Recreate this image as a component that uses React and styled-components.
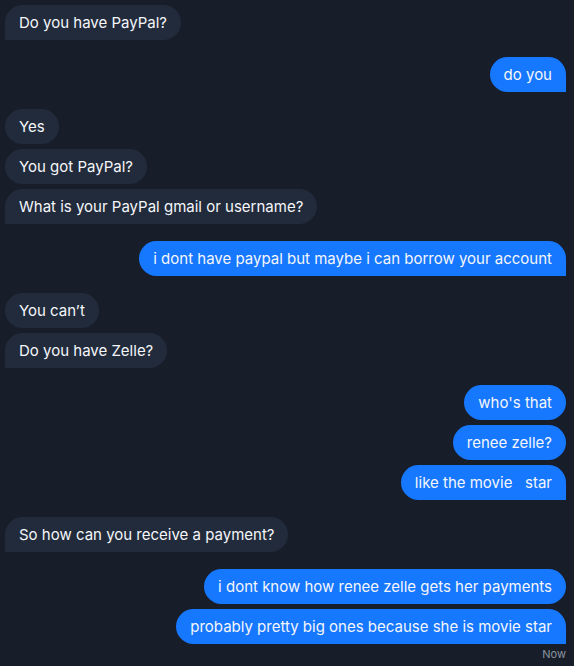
import React from "react";
import styled, { createGlobalStyle, css } from "styled-components";

const GlobalStyle = createGlobalStyle`
  html, body {
    margin: 0;
    padding: 0;
    background: #181e29;
  }
  body {
    font-family: Inter, "Noto Sans", sans-serif;
    -webkit-font-smoothing: antialiased;
  }
`;

const ChatWindow = styled.div`
  height: 100vh;
  box-sizing: border-box;
  overflow: hidden;
  display: flex;
  flex-direction: column;
  justify-content: flex-end;
  gap: 17px;
  padding: 0 8px 5px 5px;
  background: #181e29;
`;

const Group = styled.div`
  display: flex;
  flex-direction: column;
  align-items: ${(props) => (props.$mine ? "flex-end" : "flex-start")};
  gap: 5px;
`;

const Bubble = styled.div`
  box-sizing: border-box;
  padding: 7px 14px;
  font-size: 15px;
  line-height: 21px;
  color: #f4f6fa;
  white-space: pre;
  border-radius: 18px;
  background: ${(props) => (props.$mine ? "#1677ff" : "#222b3b")};
  ${(props) =>
    props.$last &&
    (props.$mine
      ? css`
          border-bottom-right-radius: 0;
        `
      : css`
          border-bottom-left-radius: 0;
        `)}
`;

// an older bubble scrolled almost out of view at the top
const Peek = styled(Bubble)`
  width: 64px;
  height: 35px;
  flex-shrink: 0;
`;

const Stamp = styled.div`
  font-size: 11px;
  line-height: 14px;
  color: #8b93a1;
  margin-top: -2px;
`;

const groups = [
  { mine: false, peek: true, msgs: ["Do you have PayPal?"] },
  { mine: true, msgs: ["do you"] },
  {
    mine: false,
    msgs: ["Yes", "You got PayPal?", "What is your PayPal gmail or username?"],
  },
  { mine: true, msgs: ["i dont have paypal but maybe i can borrow your account"] },
  { mine: false, msgs: ["You can\u2019t", "Do you have Zelle?"] },
  { mine: true, msgs: ["who's that", "renee zelle?", "like the movie   star"] },
  { mine: false, msgs: ["So how can you receive a payment?"] },
  {
    mine: true,
    msgs: [
      "i dont know how renee zelle gets her payments",
      "probably pretty big ones because she is movie star",
    ],
    stamp: "Now",
  },
];

export default function App() {
  return (
    <>
      <GlobalStyle />
      <ChatWindow>
        {groups.map((g, i) => (
          <Group key={i} $mine={g.mine}>
            {g.peek && <Peek $mine={g.mine} aria-hidden="true" />}
            {g.msgs.map((m, j) => (
              <Bubble key={j} $mine={g.mine} $last={j === g.msgs.length - 1}>
                {m}
              </Bubble>
            ))}
            {g.stamp && <Stamp>{g.stamp}</Stamp>}
          </Group>
        ))}
      </ChatWindow>
    </>
  );
}
